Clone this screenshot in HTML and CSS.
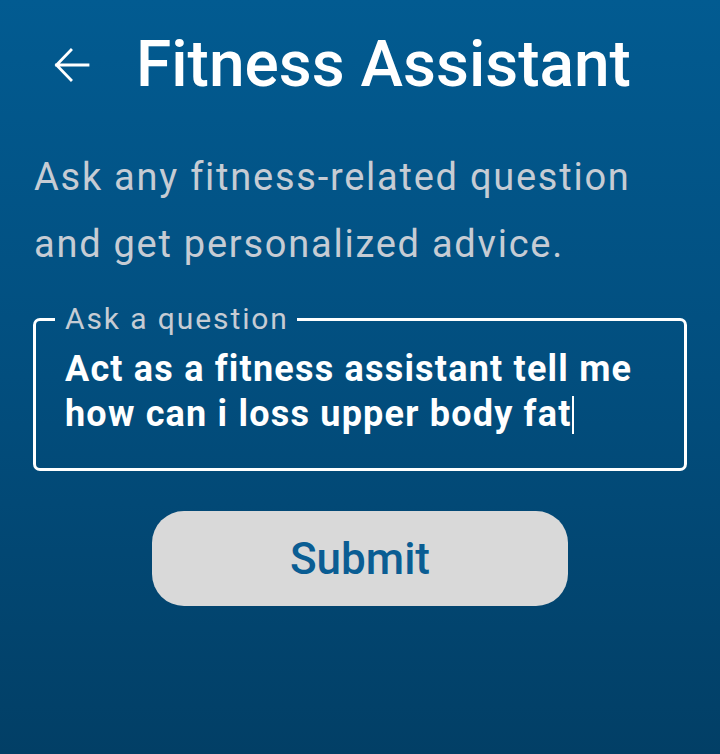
FILE: index.html
```html
<!DOCTYPE html>
<html>
<head>
<meta charset="utf-8">
<link rel="stylesheet" href="styles.css">
</head>
<body>
<div class="screen">
  <header class="topbar">
    <button class="back" aria-label="Back">
      <svg width="40" height="40" viewBox="0 0 40 40"><path d="M3.5 20H35M18 5L3.5 20L18 35" fill="none" stroke="#fff" stroke-width="2.8" stroke-linecap="square" stroke-linejoin="miter"/></svg>
    </button>
    <h1 class="title">Fitness Assistant</h1>
  </header>
  <p class="intro">Ask any fitness-related question and get personalized advice.</p>
  <fieldset class="field">
    <legend class="field-label">Ask a question</legend>
    <div class="field-text">Act as a fitness assistant tell me how can i loss upper body fat<span class="caret"></span></div>
  </fieldset>
  <div class="actions">
    <button class="submit">Submit</button>
  </div>
</div>
</body>
</html>
```
FILE: styles.css
```css
html, body {
  margin: 0;
  padding: 0;
}
body {
  font-family: Roboto, "Noto Sans", sans-serif;
  background: linear-gradient(180deg, #025b91 0%, #024e7e 50%, #023f66 100%);
  min-height: 754px;
}
.screen {
  width: 720px;
  height: 754px;
  box-sizing: border-box;
  padding: 30px 33px 0 33px;
}
.topbar {
  display: flex;
  align-items: center;
  gap: 43px;
  padding-left: 20px;
  height: 70px;
}
.back {
  background: none;
  border: 0;
  padding: 0;
  width: 40px;
  height: 40px;
  display: flex;
}
.title {
  margin: 0;
  color: #fff;
  font-weight: 500;
  font-size: 64px;
  line-height: 70px;
}
.intro {
  margin: 44px 0 0 1px;
  color: #c6ccd4;
  font-size: 38px;
  line-height: 67px;
  letter-spacing: 1.75px;
  width: 640px;
}
.field {
  margin: 26px 0 0 0;
  border: 3px solid #fff;
  border-radius: 7px;
  padding: 0 0 31px 29px;
  width: 654px;
  box-sizing: border-box;
}
.field-label {
  color: #c6ccd4;
  font-size: 30px;
  letter-spacing: 1.9px;
  padding: 0 8px 0 10px;
  margin-left: -10px;
  line-height: 30px;
}
.field-text {
  color: #fff;
  font-weight: 700;
  font-size: 36px;
  line-height: 45px;
  letter-spacing: 1.2px;
  margin-top: 13px;
}
.caret {
  display: inline-block;
  width: 2px;
  height: 38px;
  background: #fff;
  vertical-align: -8px;
  margin-left: 0;
}
.actions {
  display: flex;
  justify-content: center;
  margin-top: 40px;
}
.submit {
  width: 416px;
  height: 95px;
  border: 0;
  border-radius: 32px;
  background: #d9d9d9;
  color: #0a5d93;
  font-family: Roboto, sans-serif;
  font-weight: 500;
  font-size: 44px;
}
```
